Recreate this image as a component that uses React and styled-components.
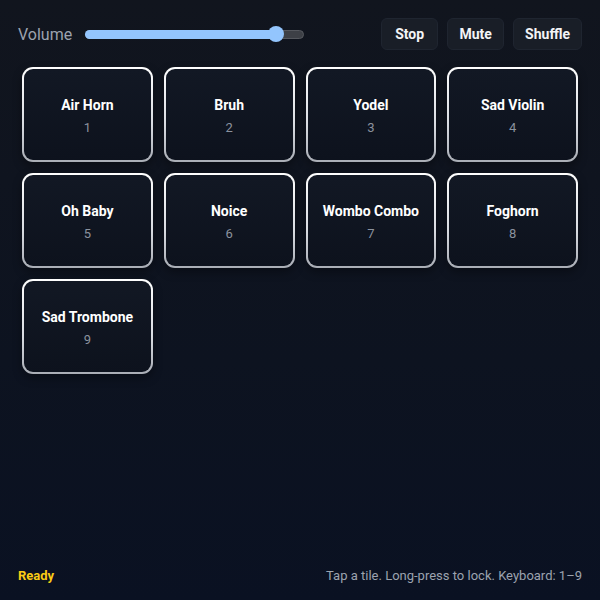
import React from "react";
import styled, { createGlobalStyle } from "styled-components";

const GlobalStyle = createGlobalStyle`
    html, body {
        margin: 0;
        padding: 0;
        height: 100%;
    }
    body {
        font-family: Roboto, "Liberation Sans", sans-serif;
        background: linear-gradient(180deg, #11151e 0%, #0d1320 60%, #0a1122 100%);
        color: #f3f4f6;
    }
    #root {
        height: 100%;
    }
`

const Page = styled.div`
    box-sizing: border-box;
    display: flex;
    flex-direction: column;
    height: 600px;
    padding: 18px 18px 17px;
`
const Toolbar = styled.div`
    align-items: center;
    display: flex;
    height: 32px;
`
const VolumeLabel = styled.span`
    color: #9ca3af;
    font-size: 16px;
    margin-right: 13px;
`
const Track = styled.div`
    background: #3d4046;
    border: 1px solid #55585e;
    border-radius: 5px;
    box-sizing: border-box;
    height: 9px;
    position: relative;
    width: 219px;
`
const Fill = styled.div`
    background: #93c5fd;
    border-radius: 5px;
    height: 9px;
    left: -1px;
    position: absolute;
    top: -1px;
`
const Thumb = styled.div`
    background: #93c5fd;
    border-radius: 50%;
    height: 16px;
    margin-left: -8px;
    position: absolute;
    top: -5px;
    width: 16px;
`
const Actions = styled.div`
    display: flex;
    gap: 9px;
    margin-left: auto;
`
const Button = styled.button`
    background: #191e27;
    border: 1px solid #1f2530;
    border-radius: 6px;
    color: #f3f4f6;
    font-family: Roboto, "Liberation Sans", sans-serif;
    font-size: 14px;
    font-weight: 700;
    height: 32px;
    min-width: 57px;
    padding: 0 11px;
`
const Grid = styled.div`
    display: grid;
    gap: 11px;
    grid-template-columns: repeat(4, 1fr);
    margin-top: 17px;
    padding: 0 4px;
`
const Tile = styled.div`
    align-items: center;
    background:
        linear-gradient(180deg, #121824 0%, #0d121d 100%) padding-box,
        linear-gradient(180deg, #ffffff 0%, #d9dce2 60%, #a9adb5 100%) border-box;
    border: 2px solid transparent;
    border-radius: 11px;
    box-shadow: 0 4px 10px rgba(0, 0, 0, 0.35);
    box-sizing: border-box;
    display: flex;
    flex-direction: column;
    height: 95px;
    justify-content: center;
    padding-top: 3px;
`
const TileName = styled.span`
    color: #ffffff;
    font-size: 14px;
    font-weight: 700;
`
const TileKey = styled.span`
    color: #8b929e;
    font-size: 13px;
    margin-top: 7px;
`
const Footer = styled.div`
    align-items: center;
    display: flex;
    justify-content: space-between;
    margin-top: auto;
`
const Status = styled.span`
    color: #facc15;
    font-size: 13px;
    font-weight: 700;
`
const Hint = styled.span`
    color: #9ca3af;
    font-size: 13px;
`

const sounds = [
    "Air Horn",
    "Bruh",
    "Yodel",
    "Sad Violin",
    "Oh Baby",
    "Noice",
    "Wombo Combo",
    "Foghorn",
    "Sad Trombone",
];

function App() {
    const volume = 87.6;
    return (
        <Page>
            <GlobalStyle />
            <Toolbar>
                <VolumeLabel>Volume</VolumeLabel>
                <Track>
                    <Fill style={{ width: `${volume}%` }} />
                    <Thumb style={{ left: `${volume}%` }} />
                </Track>
                <Actions>
                    <Button>Stop</Button>
                    <Button>Mute</Button>
                    <Button>Shuffle</Button>
                </Actions>
            </Toolbar>
            <Grid>
                {sounds.map((name, i) => (
                    <Tile key={name}>
                        <TileName>{name}</TileName>
                        <TileKey>{i + 1}</TileKey>
                    </Tile>
                ))}
            </Grid>
            <Footer>
                <Status>Ready</Status>
                <Hint>Tap a tile. Long-press to lock. Keyboard: 1–9</Hint>
            </Footer>
        </Page>
    );
}

export default App;
